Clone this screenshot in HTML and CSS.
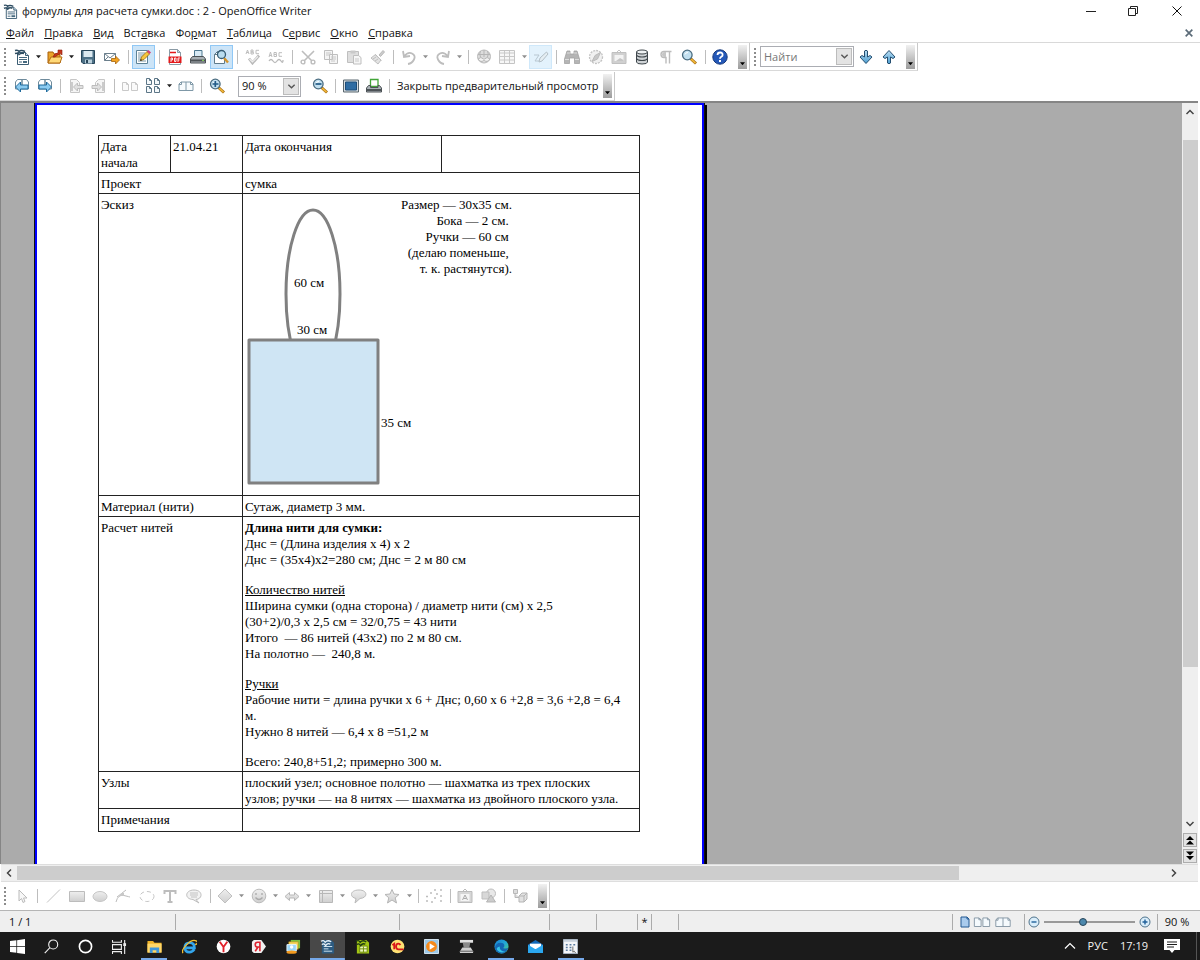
FILE: index.html
```html
<!DOCTYPE html>
<html lang="ru">
<head>
<meta charset="utf-8">
<title>формулы для расчета сумки.doc : 2 - OpenOffice Writer</title>
<link rel="stylesheet" href="styles.css">
</head>
<body>
<svg class="defs" aria-hidden="true">
  <defs>
    <linearGradient id="lgBlue" x1="0" y1="0" x2="0" y2="1"><stop offset="0" stop-color="#b9dcf2"/><stop offset="1" stop-color="#4c9ed1"/></linearGradient>
    <linearGradient id="lgGray" x1="0" y1="0" x2="0" y2="1"><stop offset="0" stop-color="#efefef"/><stop offset="1" stop-color="#cfcfcf"/></linearGradient>
    <linearGradient id="lgEdge" x1="0" y1="0" x2="1" y2="1"><stop offset="0" stop-color="#1b7fd0"/><stop offset=".5" stop-color="#22a8d8"/><stop offset="1" stop-color="#5ad36a"/></linearGradient>
  </defs>
  <symbol id="writer" viewBox="0 0 16 16"><path d="M3.500 3.500h8l3 3v9h-11z" fill="#fff" stroke="#3b5d73"/><path d="M11.500 3.500v3h3" fill="#cfe0ea" stroke="#3b5d73"/><path d="M5 8.500h8M5 10.500h8M5 13h3" stroke="#46697f"/><path d="M9 12h4v2H9z" fill="#46697f"/><path d="M1 1.500q3-1 4 1 2-2 6 0M1 4.500q3-1 4 1 2-2 5-1" fill="none" stroke="#2d4b60" stroke-width="1.500"/></symbol>
  <symbol id="caret" viewBox="0 0 6 4"><path d="M0 0h6L3 3.500z" fill="currentColor"/></symbol>
  <symbol id="open" viewBox="0 0 16 16"><path d="M1 14V3h5l1 2h6v9z" fill="#e9a42b" stroke="#a85f0b"/><path d="M1 14l3-6h11l-2 6z" fill="#ffd978" stroke="#b36c12"/><path d="M6 8q1-4 5-4V1h4v5l-1.500-1.500Q10 6 8 8z" fill="#c7371c" stroke="#8b1d0e" stroke-width=".6"/></symbol>
  <symbol id="save" viewBox="0 0 16 16"><path d="M1.500 1.500h13v13H3l-1.500-1.500z" fill="#4d7187" stroke="#28465a"/><path d="M3.500 2h9v6h-9z" fill="#dce9f0"/><path d="M5 10.500h7v4H5z" fill="#b9cfdb"/><path d="M6 11h2v3H6z" fill="#28465a"/></symbol>
  <symbol id="mail" viewBox="0 0 16 16"><path d="M.5 4.500h11v7H.5z" fill="#fff" stroke="#6b7f8c"/><path d="M.5 4.500L6 9l5.500-4.500M.5 11.500L4 8" fill="none" stroke="#6b7f8c"/><path d="M7.500 9.500h4v-2.500l4 4-4 4v-2.500h-4z" fill="#f4a321" stroke="#a3630c" stroke-width=".8"/></symbol>
  <symbol id="edit" viewBox="0 0 16 16"><path d="M1.500 1.500h11v13h-11z" fill="#fff" stroke="#5d8296"/><path d="M3 4h7M3 6h6M3 8h5M3 10h3M3 12h8" stroke="#7a97a6"/><path d="M5.500 11.500l1-3.500 5.500-5.500 2.500 2.500L9 10.500z" fill="#f7c63d" stroke="#96690d" stroke-width=".8"/><path d="M12 2.500L13.500 1 16 3.500 14.500 5z" fill="#d5407a"/><path d="M5 12l.8-2 1.400 1.300z" fill="#222"/></symbol>
  <symbol id="pdf" viewBox="0 0 16 16"><path d="M2.500.5h8l3 3v12h-11z" fill="#fff" stroke="#8a9aa5"/><path d="M10.500.5v3h3z" fill="#c8d6df" stroke="#8a9aa5"/><path d="M3 3.500h6" stroke="#e3191b" stroke-width="1.500"/><path d="M1.500 7.500h13V14h-13z" fill="#e3191b"/><path d="M4 13V9h1.500v2H4M7.500 9v3.500h1.500V9zM11 13V9h2M11 11h1.500" fill="none" stroke="#fff" stroke-width=".9"/></symbol>
  <symbol id="print" viewBox="0 0 16 16"><path d="M4.500 1.500h7.500v6h-7.500z" fill="#d8eaf5" stroke="#4e788f"/><path d="M2.500 7.500h11l2 2.500v4H.5v-4z" fill="#a9b0b5" stroke="#4c5256"/><path d="M1 10.500h14v2H1z" fill="#4c5256"/><path d="M12 11.300h2" stroke="#8ae25a"/></symbol>
  <symbol id="preview" viewBox="0 0 16 16"><path d="M1.500 14.500v-9l3-3h7v12z" fill="#fff" stroke="#5f7b8b"/><path d="M1.500 5.500h3v-3" fill="none" stroke="#5f7b8b"/><path d="M11 9l4 4.500" stroke="#d3942b" stroke-width="2.400"/><circle cx="8.500" cy="5.500" r="4" fill="#b9dcee" stroke="#365c74" stroke-width="1.300"/></symbol>
  <symbol id="spell" viewBox="0 0 16 16"><path d="M1 5l1.500-4L4 5M1.500 3.500h2M6 1v4h2.300V3H6h2V1zM14 1.300h-3v3.400h3" fill="none" stroke="#bdbdbd"/><path d="M4 9.500L7.500 14 14 6.500" fill="none" stroke="#b9b9b9" stroke-width="2.800"/><path d="M4.500 10l3 3L13 7.500" fill="none" stroke="#eee" stroke-width="1.200"/></symbol>
  <symbol id="autospell" viewBox="0 0 16 16"><path d="M1 8l1.500-5L4 8M1.500 6.500h2M6 3.500v4h2.500V5.500H6h2.300v-2zM14 3.700h-3v3.600h3" fill="none" stroke="#bdbdbd"/><path d="M1 12q2-3 4 0t4 0 4 0 2-1" fill="none" stroke="#b9b9b9" stroke-width="1.300"/></symbol>
  <symbol id="cut" viewBox="0 0 16 16"><path d="M2 2l10 10M14 2L4 12" stroke="#bdbdbd" stroke-width="1.600"/><circle cx="3" cy="13" r="1.900" fill="none" stroke="#bdbdbd" stroke-width="1.400"/><circle cx="13" cy="13" r="1.900" fill="none" stroke="#bdbdbd" stroke-width="1.400"/></symbol>
  <symbol id="copy" viewBox="0 0 16 16"><path d="M1.500 1.500h8v9h-8zM6.500 5.500h8v9h-8z" fill="#f4f4f4" stroke="#bfbfbf"/><path d="M3 4h5M3 6h3M8 8h5M8 10h5M8 12h4" stroke="#c8c8c8"/></symbol>
  <symbol id="paste" viewBox="0 0 16 16"><path d="M1.500 2.500h11v11h-11z" fill="#dedede" stroke="#bfbfbf"/><path d="M4.500 1.500h5v3h-5z" fill="#c9c9c9"/><path d="M7.500 6.500h5l2.500 2v6.500H7.500z" fill="#f6f6f6" stroke="#bfbfbf"/><path d="M9 10h4M9 12h4" stroke="#c8c8c8"/></symbol>
  <symbol id="brush" viewBox="0 0 16 16"><path d="M9 6l4-4.500L14.500 3 10.500 7.500z" fill="#ccc" stroke="#b9b9b9"/><path d="M5.500 5.500l5.500 5.500-3 4-7-6z" fill="#e3e3e3" stroke="#bfbfbf"/><path d="M5 5.500l6.500 6M3 10l3-2M5 12l3-2" stroke="#bfbfbf"/></symbol>
  <symbol id="undo" viewBox="0 0 16 16"><path d="M2 2l1 6 6-1M3 7.500q4-5 8-3t2 6-6 4.500" fill="none" stroke="#bdbdbd" stroke-width="1.800"/></symbol>
  <symbol id="redo" viewBox="0 0 16 16"><path d="M14 2l-1 6-6-1M13 7.500q-4-5-8-3t-2 6 6 4.500" fill="none" stroke="#bdbdbd" stroke-width="1.800"/></symbol>
  <symbol id="globe" viewBox="0 0 16 16"><circle cx="8" cy="7.500" r="6.500" fill="#dcdcdc" stroke="#bbb"/><path d="M2 5.500h12M8 1v7M4.500 2q-1.500 3 0 6M11.500 2q1.500 3 0 6" stroke="#b5b5b5" fill="none"/><path d="M2 10q3-3 5.500 0h1Q11 7 14 10q-3 4-5.500 1.500h-1Q5 14 2 10z" fill="#f2f2f2" stroke="#b5b5b5"/></symbol>
  <symbol id="grid" viewBox="0 0 16 16"><path d="M.5 1.500h15v13H.5z" fill="#f7f7f7" stroke="#c4c4c4"/><path d="M1 4h14M1 7.500h14M1 11h14M5.500 2v12M10.500 2v12" stroke="#c8c8c8"/></symbol>
  <symbol id="pencil" viewBox="0 0 16 16"><path d="M1 6h5l-4 6h5" fill="none" stroke="#b8c7d1"/><path d="M6 13l1-4 6.500-6L15 5l-6 7z" fill="#e5eef3" stroke="#b3bfc6"/></symbol>
  <symbol id="binoc" viewBox="0 0 16 16"><path d="M3 2h3v3h4V2h3l2.500 8v4.500h-5V9h-5v5.500H.5V10z" fill="#b5b5b5" stroke="#a2a2a2" stroke-width=".8"/><path d="M1 10.500h4M11 10.500h4M3 4h3M10 4h3" stroke="#ddd"/></symbol>
  <symbol id="compass" viewBox="0 0 16 16"><circle cx="8" cy="8" r="6.500" fill="#f1f1f1" stroke="#c3c3c3" stroke-width="1.300" stroke-dasharray="2 1"/><path d="M12.500 3.500L9.500 10l-5.500 2.500 3-6z" fill="#c8c8c8" stroke="#bbb"/></symbol>
  <symbol id="gallery" viewBox="0 0 16 16"><path d="M6 3L8 1l2 2" fill="none" stroke="#c3c3c3"/><path d="M1 3.500h14v11H1z" fill="#d0d0d0" stroke="#c0c0c0"/><path d="M3.500 6h9v6h-9z" fill="#f3f3f3"/><path d="M5 12l4-3 3.500 2v1z" fill="#c5c5c5"/></symbol>
  <symbol id="db" viewBox="0 0 16 16"><path d="M2.500 3v10q0 2 5.500 2t5.500-2V3z" fill="#cfd3d6" stroke="#3e464b"/><ellipse cx="8" cy="3" rx="5.500" ry="2" fill="#eef1f3" stroke="#3e464b"/><path d="M2.500 6q1 2 5.500 2t5.500-2M2.500 9.500q1 2 5.500 2t5.500-2" fill="none" stroke="#3e464b" stroke-width="1.200"/></symbol>
  <symbol id="pilcrow" viewBox="0 0 16 16"><path d="M13.500 2.500H6a3 3 0 0 0 0 6h2v6M11.500 3v11.500" fill="none" stroke="#bcbcbc" stroke-width="1.400"/><path d="M4 5.500q0-2.500 2.500-2.500H8v5H6.500Q4 8 4 5.500z" fill="#c6c6c6"/></symbol>
  <symbol id="lens" viewBox="0 0 16 16"><path d="M9.500 9.500L15 14.500" stroke="#a56c12" stroke-width="3"/><path d="M10 10l4.500 4.200" stroke="#f2b93a" stroke-width="1.600"/><circle cx="6.300" cy="6" r="4.800" fill="#c2e0f0" stroke="#4a6c80" stroke-width="1.300"/><path d="M4 5.500Q4.500 3.500 7 3.500" fill="none" stroke="#fff"/></symbol>
  <symbol id="zin" viewBox="0 0 16 16"><use href="#lens"/><path d="M3.500 6h6M6.300 3v6" stroke="#225a86" stroke-width="1.700"/></symbol>
  <symbol id="zout" viewBox="0 0 16 16"><use href="#lens"/><path d="M3.500 6h6" stroke="#225a86" stroke-width="1.700"/></symbol>
  <symbol id="help" viewBox="0 0 16 16"><circle cx="8" cy="8" r="7.200" fill="#2458b8" stroke="#16397b"/><path d="M5.500 6q0-2.500 2.600-2.500T10.600 6q0 1-1.300 1.800T8 9.800" fill="none" stroke="#fff" stroke-width="1.800"/><path d="M7 11h2v2H7z" fill="#fff"/></symbol>
  <symbol id="adown" viewBox="0 0 16 16"><path d="M6.500 2q1.500-1.500 3 0v6l2.500-1.500 2 1.500-6 6.500L2 8l2-1.500L6.500 8z" fill="url(#lgBlue)" stroke="#244e70"/></symbol>
  <symbol id="aup" viewBox="0 0 16 16"><path d="M6.500 14q1.500 1.500 3 0V8l2.500 1.500 2-1.500-6-6.500L2 8l2 1.500L6.500 8z" fill="url(#lgBlue)" stroke="#244e70"/></symbol>
  <symbol id="pgprev" viewBox="0 0 16 16"><path d="M1.500 11V4l2-2.500H8V11zM8 1.500h4.500l2 2.500v7H8z" fill="#fff" stroke="#6f8b9c"/><path d="M1.500 9l5-5v3H14v4H6.500v3z" fill="#8ccbf0" stroke="#1f6a9c"/></symbol>
  <symbol id="pgnext" viewBox="0 0 16 16"><path d="M1.500 11V4l2-2.500H8V11zM8 1.500h4.500l2 2.500v7H8z" fill="#fff" stroke="#6f8b9c"/><path d="M14.500 9l-5-5v3H2v4h7.500v3z" fill="#8ccbf0" stroke="#1f6a9c"/></symbol>
  <symbol id="first" viewBox="0 0 16 16"><path d="M2.500 1.500h6l3 3v10h-9z" fill="#f5f5f5" stroke="#c6c6c6"/><path d="M4 4v9" stroke="#bdbdbd" stroke-width="1.500"/><path d="M5.500 9l4-4v2.500H15v3H9.500V13z" fill="#e0e0e0" stroke="#bdbdbd"/></symbol>
  <symbol id="last" viewBox="0 0 16 16"><path d="M13.500 1.500h-6l-3 3v10h9z" fill="#f5f5f5" stroke="#c6c6c6"/><path d="M12 4v9" stroke="#bdbdbd" stroke-width="1.500"/><path d="M10.500 9l-4-4v2.500H1v3h5.500V13z" fill="#e0e0e0" stroke="#bdbdbd"/></symbol>
  <symbol id="two" viewBox="0 0 16 16"><path d="M.5 12.500v-8h4l2 2v6zM9.500 12.500v-8h4l2 2v6z" fill="#fafafa" stroke="currentColor"/><path d="M4.500 4.500v2h2M13.500 4.500v2h2" fill="none" stroke="currentColor"/></symbol>
  <symbol id="four" viewBox="0 0 16 16"><path d="M1.500 6.500v-6h3l2 2v4zM9.500 6.500v-6h3l2 2v4zM1.500 14.500v-6h3l2 2v4zM9.500 14.500v-6h3l2 2v4z" fill="#f5f9fb" stroke="#5c7687"/><path d="M4.500.5v2h2M12.500.5v2h2M4.500 8.500v2h2M12.500 8.500v2h2" fill="none" stroke="#5c7687"/></symbol>
  <symbol id="book" viewBox="0 0 16 16"><path d="M1 12.500V6l2-2h10l2 2v6.500z" fill="#f7fbfd" stroke="#7f98a7"/><path d="M8 4v8.500M1 6.500h2.500V4M15 6.500h-2.500V4" fill="none" stroke="#7f98a7"/></symbol>
  <symbol id="full" viewBox="0 0 16 16"><path d="M.5 2h15v12H.5z" fill="#d8dde0" stroke="#59666e"/><path d="M2.500 4h11v8h-11z" fill="#2e6ca3" stroke="#1d4c78"/></symbol>
  <symbol id="printpg" viewBox="0 0 16 16"><path d="M4.500 1.500h7.500v7h-7.500z" fill="#fff" stroke="#42a538" stroke-width="1.300"/><path d="M2.500 7.500h2v2h7.500v-2h1.500l2 2.500v4H.5v-4z" fill="#a9b0b5" stroke="#4c5256"/><path d="M1 11h14v2H1z" fill="#4c5256"/></symbol>
  <symbol id="wclose" viewBox="0 0 12 12"><path d="M1.500 1.500l9 9M10.500 1.500l-9 9" stroke="currentColor"/></symbol>
  <symbol id="dclose" viewBox="0 0 12 12"><path d="M2 2l8 8M10 2l-8 8" stroke="currentColor" stroke-width="2"/></symbol>
  <symbol id="chev" viewBox="0 0 10 10"><path d="M1.500 3L5 6.500 8.500 3" fill="none" stroke="currentColor" stroke-width="1.500"/></symbol>
</svg>

<header class="titlebar">
  <svg class="ic"><use href="#writer"/></svg>
  <h1>формулы для расчета сумки.doc : 2 - OpenOffice Writer</h1>
  <div class="winbtns">
    <button aria-label="Свернуть"><svg viewBox="0 0 12 12"><path d="M1 6.500h10" stroke="#222"/></svg></button>
    <button aria-label="Окно"><svg viewBox="0 0 12 12"><path d="M1.500 3.500h7v7h-7zM3.500 3.500v-2h7v7h-2" fill="none" stroke="#222"/></svg></button>
    <button aria-label="Закрыть"><svg><use href="#wclose"/></svg></button>
  </div>
</header>

<nav class="menubar">
  <button><u>Ф</u>айл</button><button><u>П</u>равка</button><button><u>В</u>ид</button><button>Вст<u>а</u>вка</button><button>Фо<u>р</u>мат</button><button><u>Т</u>аблица</button><button>С<u>е</u>рвис</button><button><u>О</u>кно</button><button><u>С</u>правка</button>
  <button class="docclose" aria-label="Закрыть документ"><svg><use href="#dclose"/></svg></button>
</nav>

<div class="bars">
  <div class="bar">
    <div class="tools main">
      <i class="grip"></i>
      <button class="tb" aria-label="Создать"><svg><use href="#writer"/></svg></button><button class="dd" aria-label="Еще"><svg><use href="#caret"/></svg></button>
      <button class="tb" aria-label="Открыть"><svg><use href="#open"/></svg></button><button class="dd" aria-label="Еще"><svg><use href="#caret"/></svg></button>
      <button class="tb" aria-label="Сохранить"><svg><use href="#save"/></svg></button>
      <button class="tb" aria-label="Письмо"><svg><use href="#mail"/></svg></button>
      <i class="sep"></i>
      <button class="tb on" aria-label="Правка файла"><svg><use href="#edit"/></svg></button>
      <i class="sep"></i>
      <button class="tb" aria-label="PDF"><svg><use href="#pdf"/></svg></button>
      <button class="tb" aria-label="Печать"><svg><use href="#print"/></svg></button>
      <button class="tb on" aria-label="Просмотр"><svg><use href="#preview"/></svg></button>
      <i class="sep"></i>
      <button class="tb" aria-label="Орфография"><svg><use href="#spell"/></svg></button>
      <button class="tb" aria-label="Автопроверка"><svg><use href="#autospell"/></svg></button>
      <i class="sep"></i>
      <button class="tb" aria-label="Вырезать"><svg><use href="#cut"/></svg></button>
      <button class="tb" aria-label="Копировать"><svg><use href="#copy"/></svg></button>
      <button class="tb" aria-label="Вставить"><svg><use href="#paste"/></svg></button>
      <button class="tb" aria-label="Кисть"><svg><use href="#brush"/></svg></button>
      <i class="sep"></i>
      <button class="tb" aria-label="Отменить"><svg><use href="#undo"/></svg></button><button class="dd off" aria-label="Еще"><svg><use href="#caret"/></svg></button>
      <button class="tb" aria-label="Вернуть"><svg><use href="#redo"/></svg></button><button class="dd off" aria-label="Еще"><svg><use href="#caret"/></svg></button>
      <i class="sep"></i>
      <button class="tb" aria-label="Гиперссылка"><svg><use href="#globe"/></svg></button>
      <button class="tb" aria-label="Таблица"><svg><use href="#grid"/></svg></button><button class="dd off" aria-label="Еще"><svg><use href="#caret"/></svg></button>
      <button class="tb on pale" aria-label="Рисование"><svg><use href="#pencil"/></svg></button>
      <i class="sep"></i>
      <button class="tb" aria-label="Найти и заменить"><svg><use href="#binoc"/></svg></button>
      <button class="tb" aria-label="Навигатор"><svg><use href="#compass"/></svg></button>
      <button class="tb" aria-label="Галерея"><svg><use href="#gallery"/></svg></button>
      <button class="tb" aria-label="Источники данных"><svg><use href="#db"/></svg></button>
      <button class="tb" aria-label="Непечатаемые символы"><svg><use href="#pilcrow"/></svg></button>
      <button class="tb" aria-label="Масштаб"><svg><use href="#lens"/></svg></button>
      <i class="sep"></i>
      <button class="tb" aria-label="Справка"><svg><use href="#help"/></svg></button>
      <button class="more" aria-label="Параметры панели"><svg><use href="#caret"/></svg></button>
    </div>
    <div class="tools find">
      <i class="grip"></i>
      <div class="combo search"><input type="text" placeholder="Найти" aria-label="Найти"><button class="arrow" aria-label="Список"><svg><use href="#chev"/></svg></button></div>
      <button class="tb" aria-label="Вниз"><svg><use href="#adown"/></svg></button>
      <button class="tb" aria-label="Вверх"><svg><use href="#aup"/></svg></button>
      <button class="more" aria-label="Параметры панели"><svg><use href="#caret"/></svg></button>
    </div>
  </div>
  <div class="bar">
    <div class="tools">
      <i class="grip"></i>
      <button class="tb" aria-label="Предыдущая"><svg><use href="#pgprev"/></svg></button>
      <button class="tb" aria-label="Следующая"><svg><use href="#pgnext"/></svg></button>
      <i class="sep"></i>
      <button class="tb" aria-label="Первая"><svg><use href="#first"/></svg></button>
      <button class="tb" aria-label="Последняя"><svg><use href="#last"/></svg></button>
      <i class="sep"></i>
      <button class="tb faint" aria-label="Две страницы"><svg><use href="#two"/></svg></button>
      <button class="tb" aria-label="Несколько страниц"><svg><use href="#four"/></svg></button><button class="dd" aria-label="Еще"><svg><use href="#caret"/></svg></button>
      <button class="tb" aria-label="Книга"><svg><use href="#book"/></svg></button>
      <i class="sep"></i>
      <button class="tb" aria-label="Увеличить"><svg><use href="#zin"/></svg></button>
      <div class="combo zoom"><select aria-label="Масштаб"><option>90 %</option></select><span class="arrow"><svg><use href="#chev"/></svg></span></div>
      <button class="tb" aria-label="Уменьшить"><svg><use href="#zout"/></svg></button>
      <i class="sep"></i>
      <button class="tb" aria-label="Полный экран"><svg><use href="#full"/></svg></button>
      <button class="tb" aria-label="Печать страниц"><svg><use href="#printpg"/></svg></button>
      <i class="sep"></i>
      <button class="closepv">Закрыть предварительный просмотр</button>
      <button class="more" aria-label="Параметры панели"><svg><use href="#caret"/></svg></button>
    </div>
  </div>
</div>

<main class="work">
  <div class="canvas">
    <article class="page">
      <table>
        <colgroup><col class="c1"><col class="c2"><col class="c3"><col class="c3"></colgroup>
        <tr class="two-line"><td>Дата<br>начала</td><td>21.04.21</td><td>Дата окончания</td><td></td></tr>
        <tr><td colspan="2">Проект</td><td colspan="2">сумка</td></tr>
        <tr><td colspan="2">Эскиз</td><td colspan="2">
          <div class="sketch">
            <svg viewBox="0 0 174 297" class="bag">
              <ellipse cx="67" cy="97" rx="27" ry="84" fill="#fff" stroke="#808080" stroke-width="3"/>
              <rect x="3" y="143" width="129" height="143" fill="#cfe5f4" stroke="#808080" stroke-width="3" stroke-linejoin="round"/>
              <text x="48" y="90">60 см</text><text x="51" y="137">30 см</text><text x="135" y="230">35 см</text>
            </svg>
            <p class="notes">Размер — 30х35 см.<br>Бока — 2 см.&nbsp;<br>Ручки — 60 см&nbsp;<br>(делаю поменьше,&nbsp;<br>т. к. растянутся).</p>
          </div></td></tr>
        <tr><td colspan="2">Материал (нити)</td><td colspan="2">Сутаж, диаметр 3 мм.</td></tr>
        <tr><td colspan="2">Расчет нитей</td><td colspan="2">
          <div class="calc">
            <p><b>Длина нити для сумки:</b><br>Днс = (Длина изделия х 4) х 2<br>Днс = (35х4)х2=280 см; Днс = 2 м 80 см</p>
            <p><u>Количество нитей</u><br>Ширина сумки (одна сторона) / диаметр нити (см) х 2,5<br>(30+2)/0,3 х 2,5 см = 32/0,75 = 43 нити<br>Итого&nbsp; — 86 нитей (43х2) по 2 м 80 см.<br>На полотно —&nbsp; 240,8 м.</p>
            <p><u>Ручки</u><br>Рабочие нити = длина ручки х 6 + Днс; 0,60 х 6 +2,8 = 3,6 +2,8 = 6,4<br>м.<br>Нужно 8 нитей — 6,4 х 8 =51,2 м</p>
            <p>Всего: 240,8+51,2; примерно 300 м.</p>
          </div></td></tr>
        <tr class="two-line"><td colspan="2">Узлы</td><td colspan="2">плоский узел; основное полотно — шахматка из трех плоских<br>узлов; ручки — на 8 нитях — шахматка из двойного плоского узла.</td></tr>
        <tr class="last"><td colspan="2">Примечания</td><td colspan="2"></td></tr>
      </table>
    </article>
  </div>
  <div class="vscroll">
    <button class="sbtn up" aria-label="Вверх"><svg><use href="#chev"/></svg></button>
    <div class="vtrack"><div class="vthumb"></div></div>
    <button class="sbtn" aria-label="Вниз"><svg><use href="#chev"/></svg></button>
    <button class="jump" aria-label="Предыдущая страница"><svg viewBox="0 0 10 10"><path d="M1 5l4-4 4 4zM1 9.500l4-4 4 4z"/></svg></button>
    <button class="jump" aria-label="Следующая страница"><svg viewBox="0 0 10 10"><path d="M1 .5l4 4 4-4zM1 5l4 4 4-4z"/></svg></button>
  </div>
</main>
<div class="hscroll">
  <button class="sbtn left" aria-label="Влево"><svg><use href="#chev"/></svg></button>
  <div class="htrack"><div class="hthumb"></div></div>
  <button class="sbtn right" aria-label="Вправо"><svg><use href="#chev"/></svg></button>
</div>

<div class="bar drawbar">
  <div class="tools draw">
    <i class="grip"></i>
    <button class="tb" aria-label="Выбор"><svg viewBox="0 0 16 16"><path d="M5 2v11l2.500-2.500L9 14.500l2-1-1.500-3.500H13z" fill="#f7f7f7" stroke="#bbb"/></svg></button>
    <i class="sep"></i>
    <button class="tb" aria-label="Линия"><svg viewBox="0 0 16 16"><path d="M2 14.500L15 1.500" stroke="#c4c4c4"/></svg></button>
    <button class="tb" aria-label="Прямоугольник"><svg viewBox="0 0 16 16"><path d="M.5 3.500h15v10H.5z" fill="url(#lgGray)" stroke="#bcbcbc"/></svg></button>
    <button class="tb" aria-label="Эллипс"><svg viewBox="0 0 16 16"><ellipse cx="8" cy="8.500" rx="7" ry="5" fill="url(#lgGray)" stroke="#c6c6c6"/></svg></button>
    <button class="tb" aria-label="Полилиния"><svg viewBox="0 0 16 16"><path d="M1 14Q3 6 9 7.500T15 9M2 9l9-7" fill="none" stroke="#bbb"/><path d="M6 5h3v3H6z" fill="#c8c8c8"/></svg></button>
    <button class="tb" aria-label="Дуга"><svg viewBox="0 0 16 16"><ellipse cx="8" cy="8.500" rx="7" ry="5" fill="none" stroke="#c6c6c6" stroke-dasharray="4 3"/></svg></button>
    <button class="tb" aria-label="Текст"><svg viewBox="0 0 16 16"><path d="M2.500 6V3h11v3M8 3v11M5.500 14h5" fill="none" stroke="#bdbdbd" stroke-width="2"/></svg></button>
    <button class="tb" aria-label="Выноска"><svg viewBox="0 0 16 16"><path d="M8 2c9 0 9 9 2 9.500L13 15l-6-3.500C-2 11-1 2 8 2z" fill="#f2f2f2" stroke="#bdbdbd"/><path d="M4 5h8M4 7h8M5 9h6" stroke="#c2c2c2"/></svg></button>
    <i class="sep"></i>
    <button class="tb" aria-label="Основные фигуры"><svg viewBox="0 0 16 16"><path d="M8 1l7 7-7 7-7-7z" fill="url(#lgGray)" stroke="#c0c0c0"/></svg></button><button class="dd off" aria-label="Еще"><svg><use href="#caret"/></svg></button>
    <button class="tb" aria-label="Символы"><svg viewBox="0 0 16 16"><circle cx="8" cy="8" r="6.800" fill="url(#lgGray)" stroke="#bbb"/><path d="M5 5v2M11 5v2M4.500 9.500q3.500 4 7 0" fill="none" stroke="#aaa" stroke-width="1.300"/></svg></button><button class="dd off" aria-label="Еще"><svg><use href="#caret"/></svg></button>
    <button class="tb" aria-label="Стрелки"><svg viewBox="0 0 16 16"><path d="M1 8.500l4.500-4V7h5V4.500l4.500 4-4.500 4V10h-5v2.500z" fill="url(#lgGray)" stroke="#b8b8b8"/></svg></button><button class="dd off" aria-label="Еще"><svg><use href="#caret"/></svg></button>
    <button class="tb" aria-label="Схемы"><svg viewBox="0 0 16 16"><path d="M1.500 2.500h13v12h-13z" fill="url(#lgGray)" stroke="#b8b8b8"/><path d="M4.500 3v11M2 5.500h12" stroke="#b8b8b8"/></svg></button><button class="dd off" aria-label="Еще"><svg><use href="#caret"/></svg></button>
    <button class="tb" aria-label="Выноски"><svg viewBox="0 0 16 16"><path d="M8 2c9 0 9 8 1 8.500L4 15l1-4.500C-2 9-1 2 8 2z" fill="url(#lgGray)" stroke="#bbb"/></svg></button><button class="dd off" aria-label="Еще"><svg><use href="#caret"/></svg></button>
    <button class="tb" aria-label="Звезды"><svg viewBox="0 0 16 16"><path d="M8 1.500l2 4.500 5 .5-3.800 3.300L12.500 15 8 12l-4.500 3 1.300-5.200L1 6.500 6 6z" fill="url(#lgGray)" stroke="#b5b5b5"/></svg></button><button class="dd off" aria-label="Еще"><svg><use href="#caret"/></svg></button>
    <i class="sep"></i>
    <button class="tb" aria-label="Точки"><svg viewBox="0 0 16 16"><path d="M0 13h2M0 8.500h2M4 5h2M8 2h2M10 6h2M14 2h2M14 8h2M8 10h2M14 13h2M5 14h2" stroke="#bdbdbd" stroke-width="1.600"/></svg></button>
    <i class="sep"></i>
    <button class="tb" aria-label="Текстовые эффекты"><svg viewBox="0 0 16 16"><path d="M6 3L8 1l2 2" fill="none" stroke="#bbb"/><path d="M1 3.500h14v11H1z" fill="#d6d6d6" stroke="#bbb"/><path d="M3.500 6h9v7h-9z" fill="#f5f5f5"/><path d="M5.500 12L8 7l2.500 5M6.500 10.500h3" fill="none" stroke="#aaa"/></svg></button>
    <button class="tb" aria-label="Из файла"><svg viewBox="0 0 16 16"><circle cx="10" cy="5.500" r="4.500" fill="#e8e8e8" stroke="#bdbdbd"/><path d="M1 4h7v7H1z" fill="#d8d8d8" stroke="#bdbdbd"/><path d="M10 7l4.500 7h-9z" fill="#ccc" stroke="#b5b5b5"/></svg></button>
    <i class="sep"></i>
    <button class="tb" aria-label="Экструзия"><svg viewBox="0 0 16 16"><path d="M1.500 1.500h4v4h-4zM3 5.500v4h5" fill="#ddd" stroke="#b8b8b8"/><path d="M7 8l3-3h5v6l-3 3H7zM7 8h5v6M12 8l3-3" fill="#e2e2e2" stroke="#b5b5b5"/></svg></button>
    <button class="more" aria-label="Параметры панели"><svg><use href="#caret"/></svg></button>
  </div>
</div>

<footer class="status">
  <span class="s1">1 / 1</span><span class="s2"></span><span class="s3"></span><span class="s4"></span><span class="s5"></span><span class="s6">*</span><span class="s7"></span><span class="s8"></span>
  <div class="views">
    <button aria-label="Одна страница"><svg class="one" viewBox="0 0 10 12"><path d="M1 1h6l2 2v8H1z" fill="#a9cbed" stroke="#225892"/><path d="M7 1v2h2" fill="none" stroke="#225892"/></svg></button>
    <button aria-label="Две страницы"><svg viewBox="0 0 20 12"><path d="M1.500 1.500h5l2.500 2v7.500H1.500zM11 1.500h5l2.500 2v7.500H11z" fill="#f5fafd" stroke="#8193a1"/><path d="M6.500 1.500v2H9M16 1.500v2h2.500" fill="none" stroke="#8193a1"/></svg></button>
    <button aria-label="Книга"><svg viewBox="0 0 20 12"><path d="M2 11V4l2-2.500h12L18 4v7zM10 1.500V11M2 4h2.500V1.500M18 4h-2.500V1.500" fill="#f5fafd" stroke="#8193a1"/></svg></button>
  </div>
  <div class="zoomer">
    <button aria-label="Уменьшить"><svg viewBox="0 0 12 12"><circle cx="6" cy="6" r="5" fill="#d9edfa" stroke="#50748d"/><path d="M3.500 6h5" stroke="#20609a" stroke-width="1.400"/></svg></button>
    <input type="range" min="0" max="100" value="43" aria-label="Масштаб">
    <button aria-label="Увеличить"><svg viewBox="0 0 12 12"><circle cx="6" cy="6" r="5" fill="#d9edfa" stroke="#50748d"/><path d="M3.500 6h5M6 3.500v5" stroke="#20609a" stroke-width="1.400"/></svg></button>
  </div>
  <span class="pct">90 %</span>
</footer>

<div class="taskbar">
  <div class="sys">
    <button aria-label="Пуск"><svg viewBox="0 0 16 16"><path d="M0 2.200L6.800 1.300v6.200H0zM7.600 1.200L16 0v7.500H7.600zM0 8.300h6.800v6.400L0 13.800zM7.600 8.300H16V16l-8.400-1.200z" fill="#fff"/></svg></button>
    <button aria-label="Поиск"><svg viewBox="0 0 16 16"><circle cx="9.800" cy="5.800" r="4.800" fill="none" stroke="#eee" stroke-width="1.200"/><path d="M6.300 9.200L.8 15" stroke="#eee" stroke-width="1.200"/></svg></button>
    <button aria-label="Кортана"><svg viewBox="0 0 16 16"><circle cx="8" cy="8" r="6.500" fill="none" stroke="#fff" stroke-width="1.800"/></svg></button>
    <button aria-label="Представление задач"><svg viewBox="0 0 16 16"><path d="M.5 1v2.500h9.500V1M.5 6h9.500v5H.5zM.5 16v-2.500h9.500V16M13.500 1v15" fill="none" stroke="#eee" stroke-width="1.200"/><path d="M12 4.500h3v3h-3z" fill="#eee"/></svg></button>
  </div>
  <div class="apps">
    <button class="open" aria-label="Проводник"><svg viewBox="0 0 16 16"><path d="M.5 2h6l1.500 2h7.500v10.500H.5z" fill="#f0b429"/><path d="M.5 5h15v9.500H.5z" fill="#ffd76a"/><path d="M3 15V9h10v6h-3v-3H6v3z" fill="#3f97dc"/></svg></button>
    <button aria-label="Internet Explorer"><svg viewBox="0 0 16 16"><path d="M13.200 11Q11 14 8 14 3 14 3 9q0-5 5.300-5 5 0 5 5.500H4.500" fill="none" stroke="#34a6ec" stroke-width="2.800"/><path d="M1 15Q-1 12 5 6t10-4-1 4" fill="none" stroke="#f2bf32" stroke-width="1.500"/></svg></button>
    <button aria-label="Yandex"><svg viewBox="0 0 16 16"><circle cx="8" cy="8" r="7.300" fill="#fff"/><path d="M4 3l4 5.500L12 3M8 8v6" fill="none" stroke="#e1222b" stroke-width="2"/></svg></button>
    <button aria-label="Яндекс"><svg viewBox="0 0 16 16"><path d="M1 3l2-2h8l5 7-5 7H3l-2-2z" fill="#f1f1f1"/><path d="M9.500 13V3.500H7q-2.500 0-2.500 2.500T7 8.500h2.500M7.500 8.500L4.500 13" fill="none" stroke="#df2430" stroke-width="1.700"/></svg></button>
    <button aria-label="Учетные записи"><svg viewBox="0 0 16 16"><path d="M5 1h10v9H5z" fill="#7ac143"/><path d="M3 3h10v8H3z" fill="#f7d45b" stroke="#b98c12" stroke-width=".6"/><path d="M1 6h10v7H1z" fill="#9bd6f7" stroke="#eaf6ff"/><circle cx="6" cy="8.500" r="1.800" fill="#fff"/><ellipse cx="6" cy="14" rx="5.500" ry="1.800" fill="#f39a1f"/></svg></button>
    <button class="open cur" aria-label="Writer"><svg viewBox="0 0 16 16"><path d="M2 1h10l3 3v11.500H2z" fill="#2d5b80"/><path d="M4 8h9M4 10.500h5M4 13h9" stroke="#d4e6f2"/><path d="M1 2.500q3-2 4.500 1Q8 .5 12 3M2 6q2-2 4 1 2-3 5-1.500" fill="none" stroke="#e9f3fa" stroke-width="1.300"/></svg></button>
    <button aria-label="Calc"><svg viewBox="0 0 16 16"><path d="M2 1h10l3 3v11.500H2z" fill="#a3c614"/><path d="M5 7.500h8v6.500H5zM5 10.500h8M9 8v6" fill="#edf6c0" stroke="#6e8d08"/><path d="M1 2.500q3-2 4.500 1Q8 .5 12 3M2 6q2-2 4 1 2-3 5-1.500" fill="none" stroke="#1f3b12" stroke-width="1.500"/></svg></button>
    <button aria-label="1С"><svg viewBox="0 0 16 16"><circle cx="8" cy="8" r="7.300" fill="#ffe173"/><path d="M2.500 6.500L4.500 5v6M11 6.500Q10.500 5 8.800 5 6.500 5 6.500 8t2.500 3h5.500" fill="none" stroke="#d8151a" stroke-width="1.900"/></svg></button>
    <button aria-label="Плеер"><svg viewBox="0 0 16 16"><path d="M.5.5h15v15H.5z" fill="#9cc9e8" stroke="#dcecf7"/><circle cx="8" cy="8" r="5.800" fill="#f58a1c"/><path d="M6 4.500l5.500 3.500L6 11.500z" fill="#fff"/></svg></button>
    <button aria-label="Сканер"><svg viewBox="0 0 16 16"><path d="M1 1h14v3H1z" fill="#e1e1e1"/><path d="M4 4h8l-1 5H5z" fill="#8a8a8a"/><path d="M3.500 9h9l2.500 4v2H1v-2z" fill="#d0d0d0"/><path d="M1 13h14" stroke="#555"/></svg></button>
    <button class="open" aria-label="Edge"><svg viewBox="0 0 16 16"><circle cx="8" cy="8" r="7.500" fill="url(#lgEdge)"/><path d="M1 9q1-5 6-5 4 0 4 3.500 0 1.500-1.500 2 4 1.500 6-.5Q13 15.500 8 15.500 2 15 1 9z" fill="#1466b3"/><path d="M6 8q0 5 6 5.500-5 2-8-1T6 8z" fill="#36c2e6"/></svg></button>
    <button aria-label="Почта"><svg viewBox="0 0 16 16"><path d="M0 6l8-5 8 5v9H0z" fill="#1269b8"/><path d="M2 5h12v6H2z" fill="#fff"/><path d="M0 6l8 5 8-5v9H0z" fill="#2ba7ee"/></svg></button>
    <button class="open" aria-label="Сетка"><svg viewBox="0 0 16 16"><path d="M.5.500h15v15H.5z" fill="#f4f6fa" stroke="#aab6c5"/><path d="M1 1h14v2H1z" fill="#c8d2de"/><path d="M3 6h2M7 6h2M11 6h2M3 9h2M7 9h2M3 12h2M7 12h2" stroke="#5a7ba0" stroke-width="1.600"/><path d="M10.500 8v6l1.500-1 1.500 2" fill="none" stroke="#666"/></svg></button>
  </div>
  <div class="tray">
    <button aria-label="Скрытые значки"><svg viewBox="0 0 12 12"><path d="M1 8.500l5-5 5 5" fill="none" stroke="#fff" stroke-width="1.200"/></svg></button>
    <span>РУС</span><time>17:19</time>
    <button aria-label="Уведомления"><svg class="note" viewBox="0 0 16 16"><path d="M0 1h16v11H10.500L8 15l-2.500-3H0z" fill="#fff"/><path d="M3 4h10M3 6.500h10M3 9h7" stroke="#1c1c1c"/></svg></button>
    <i class="desk"></i>
  </div>
</div>
</body>
</html>
```

FILE: styles.css
```css
* { box-sizing: border-box; }
html, body { height: 100%; margin: 0; }
body {
  display: flex;
  flex-direction: column;
  overflow: hidden;
  background: #fff;
  color: #111;
  font: 11px/16px "Open Sans", "Noto Sans", sans-serif;
}
button {
  display: flex;
  align-items: center;
  justify-content: center;
  padding: 0;
  border: 0;
  background: none;
  color: inherit;
  font: inherit;
  white-space: nowrap;
}
svg { display: block; flex: none; }
p { margin: 0; }
.defs { position: absolute; width: 0; height: 0; }
.ic { width: 15px; height: 15px; }

/* Window frame */
.titlebar {
  display: flex;
  flex: none;
  align-items: center;
  gap: 4px;
  height: 22px;
  padding-left: 3px;
}
.titlebar h1 { margin: 0; font-size: 11px; font-weight: 400; }
.winbtns { display: flex; margin-left: auto; }
.winbtns button { width: 42px; height: 20px; }
.winbtns button:last-child { width: 46px; }
.winbtns svg { width: 12px; height: 12px; }
.menubar {
  display: flex;
  flex: none;
  align-items: center;
  gap: 10px;
  height: 21px;
  padding: 1px 6px 0;
  border-bottom: 1px solid #d9d9d9;
}
.menubar u { text-underline-offset: 1px; }
.docclose { margin-left: auto; color: #5b6b78; }
.docclose svg { width: 10px; height: 10px; }

/* Toolbars */
.bars { flex: none; }
.bar { display: flex; height: 29px; }
.bars .bar:first-child { border-bottom: 1px solid #fff; }
.tools {
  display: flex;
  align-items: center;
  padding-right: 2px;
  border-right: 1px solid #c9c9c9;
  border-bottom: 1px solid #d9d9d9;
}
.main { width: 750px; }
.draw { width: 550px; }
.main .tb, .draw .tb { flex: 1 1 23px; }
.grip {
  flex: none;
  width: 2px;
  height: 18px;
  margin: 0 4px;
  background: repeating-linear-gradient(#8c8c8c 0 2px, #fff 2px 4px);
}
.tb { flex: none; width: 23px; height: 24px; }
.tb svg { width: 16px; height: 16px; }
.tb.on { border: 1px solid #90c8f6; background: #cce4f7; }
.tb.pale { border-color: #cfe8fa; background: #e3f2fc; }
.faint { color: #c9c9c9; }
.dd { flex: none; width: 10px; height: 24px; color: #222; }
.dd.off { color: #909090; }
.dd svg { width: 5px; height: 4px; }
.sep { flex: none; width: 1px; height: 14px; margin: 0 3px 0 4px; background: #bdbdbd; }
.more {
  align-items: flex-end;
  flex: none;
  width: 9px;
  height: 24px;
  margin-left: 6px;
  padding-bottom: 3px;
  background: linear-gradient(#f1f1f1, #9c9c9c);
  color: #000;
}
.more svg { width: 5px; height: 4px; }
.combo { position: relative; display: flex; height: 21px; border: 1px solid #abadb3; background: #fff; }
.combo input, .combo select {
  flex: 1;
  min-width: 0;
  padding: 0 3px;
  border: 0;
  appearance: none;
  background: none;
  color: #111;
  font: inherit;
}
.combo input::placeholder { color: #777; opacity: 1; }
.arrow {
  display: flex;
  align-items: center;
  justify-content: center;
  width: 16px;
  margin: 1px;
  border: 1px solid #bcbcbc;
  background: #e3e3e3;
  color: #555;
}
.arrow svg { width: 9px; height: 9px; }
.zoom .arrow { position: absolute; top: 0; right: 0; bottom: 0; pointer-events: none; }
.search { width: 94px; }
.zoom { width: 63px; margin: 0 7px 0 10px; }
.closepv { margin-left: 4px; }
.closepv + .more { margin-left: 4px; }

/* Document area */
.work { display: flex; flex: 1; min-height: 0; border: 2px solid #858585; border-width: 2px 0 0 1px; margin-right: 2px; }
.canvas { flex: 1; overflow: hidden; padding-left: 34px; background: #ababab; }
.page {
  width: 669px;
  min-height: 100%;
  padding: 30px 0 60px 61px;
  border: 2px solid #0000ff;
  border-bottom: 0;
  outline: 1px solid #111;
  box-shadow: 3px 2px 0 #000;
  background: #fff;
  color: #000;
}
.page table {
  width: 542px;
  border-collapse: collapse;
  table-layout: fixed;
  font: 13px/16px "Liberation Serif", "Times New Roman", serif;
}
.c1, .c2 { width: 72px; }
.page td { height: 21px; padding: 3px 2px 1px; border: 1px solid #222; vertical-align: top; white-space: nowrap; }
.page .two-line td { height: 37px; }
.page .last td { height: 23px; }
.sketch { display: flex; }
.bag { width: 174px; height: 297px; margin-left: 1px; font: 13px "Liberation Serif", "Times New Roman", serif; }
.notes { width: 92px; display: flex; justify-content: flex-end; text-align: right; }
.calc { display: flex; flex-direction: column; gap: 14px; }

.vscroll { display: flex; flex: none; flex-direction: column; width: 16px; background: #efefef; }
.vtrack { flex: 1; padding-top: 20px; }
.vthumb { height: 78%; background: #cdcdcd; margin-left: 1px; }
.sbtn { width: 16px; height: 17px; color: #444; flex: none; }
.sbtn svg { width: 10px; height: 10px; }
.up svg { transform: rotate(180deg); }
.left svg { transform: rotate(90deg); }
.right svg { transform: rotate(-90deg); }
.jump { height: 14px; margin: 1px; border: 1px solid #adadad; background: #e3e3e3; }
.jump svg { width: 10px; height: 10px; }
.hscroll { display: flex; flex: none; height: 18px; margin: 0 2px 0 1px; padding-right: 16px; border: 1px solid #dedede; border-width: 1px 0; background: #efefef; }
.hscroll .sbtn { height: 16px; }
.htrack { flex: 1; padding: 1px 0; }
.hthumb { width: 82%; height: 14px; background: #cdcdcd; }

.drawbar { flex: none; border-bottom: 1px solid #b5b5b5; }
.draw { border-bottom: 0; }

/* Status bar */
.status { display: flex; flex: none; align-items: center; height: 21px; padding-top: 1px; background: #efefef; }
.status > * { display: flex; align-items: center; justify-content: center; height: 16px; border-right: 1px solid #ababab; }
.status .s1 { justify-content: flex-start; width: 176px; padding-left: 9px; }
.s2 { width: 224px; }
.s3 { width: 150px; }
.s4 { width: 47px; }
.s5 { width: 41px; }
.s6 { width: 14px; }
.s7 { width: 27px; }
.s8 { flex: 1; }
.views { width: 72px; gap: 3px; padding-right: 6px; }
.views svg { width: 18px; height: 12px; }
.views .one { width: 10px; }
.zoomer { width: 133px; gap: 4px; padding-right: 4px; }
.zoomer svg { width: 12px; height: 12px; }
.zoomer input { appearance: none; width: 91px; height: 12px; margin: 0; background: linear-gradient(#999, #999) center / 100% 2px no-repeat; }
.zoomer input::-webkit-slider-thumb { appearance: none; width: 8px; height: 8px; border: 1px solid #28465a; border-radius: 4px; background: #4d88ad; }
.status .pct { width: 42px; padding-right: 4px; border: 0; }

/* Taskbar */
.taskbar { display: flex; flex: none; height: 28px; background: #1b1b1b; color: #f2f2f2; }
.sys { display: flex; width: 137px; }
.apps { display: flex; width: 451px; }
.sys button, .apps button { flex: 1; height: 28px; }
.sys svg, .apps svg { width: 15px; height: 15px; }
.apps .open { background: linear-gradient(#76a9ea, #76a9ea) bottom / 26px 2px no-repeat; }
.apps .cur { background: linear-gradient(#76a9ea, #76a9ea) bottom / 100% 2px no-repeat #484848; }
.tray { display: flex; align-items: center; gap: 12px; margin-left: auto; }
.tray svg { width: 12px; height: 12px; }
.tray .note { width: 16px; height: 16px; margin-left: 4px; }
.desk { width: 4px; height: 28px; margin-left: 4px; border-left: 1px solid #555; }
```
